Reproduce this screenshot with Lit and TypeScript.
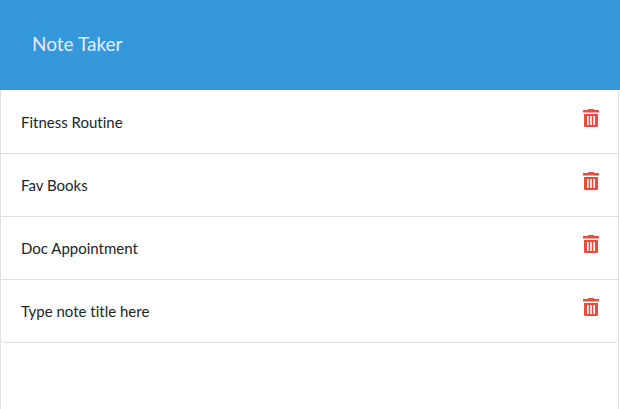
import { LitElement, html, css } from "lit";
import { customElement, state } from "lit/decorators.js";

@customElement("app-root")
export class AppRoot extends LitElement {
  static styles = css`
    :host {
      display: flex;
      flex-direction: column;
      min-height: 100vh;
      background: #fff;
      color: #212529;
      font-family: Lato, "Liberation Sans", sans-serif;
      font-size: 15px;
      line-height: 22px;
      font-variant-ligatures: none;
    }
    header {
      padding: 31px 32px 33px;
      background: #3498db;
    }
    .brand {
      display: block;
      color: #e8ecef;
      font-size: 19px;
      line-height: 26px;
      text-decoration: none;
    }
    main {
      flex: 1;
      margin-right: 1px;
      border: solid #dfdfdf;
      border-width: 0 1px;
    }
    ul {
      margin: 0;
      padding: 1px 0 0;
      list-style: none;
    }
    li {
      display: flex;
      justify-content: space-between;
      align-items: flex-start;
      padding: 20px 19px 20px 20px;
      border-bottom: 1px solid #dfdfdf;
    }
    li:last-child {
      border-radius: 0 0 4px 4px;
    }
    .title {
      color: #212529;
      text-decoration: none;
    }
    .delete {
      display: flex;
      margin-top: -2px;
      padding: 0;
      border: 0;
      background: none;
      color: #e74c3c;
      cursor: pointer;
    }
  `;

  @state() private notes = ["Fitness Routine", "Fav Books", "Doc Appointment", "Type note title here"];

  private remove(index: number) {
    this.notes = this.notes.filter((_, i) => i !== index);
  }

  render() {
    return html`
      <header><a class="brand" href="#">Note Taker</a></header>
      <main>
        <ul>
          ${this.notes.map(
            (note, i) => html`<li>
              <a class="title" href="#">${note}</a>
              <button class="delete" aria-label="Delete ${note}" @click=${() => this.remove(i)}>
                <svg width="16" height="18" viewBox="0 0 16 18" fill="currentColor" aria-hidden="true">
                  <path d="M5.300 0h5.400l.5 1H15.600l.4.400V3.200l-.3.200H.3L0 3.200V1.400L.4 1H4.800z" />
                  <path fill-rule="evenodd" d="M1 5h14v12a1 1 0 0 1-1 1H2a1 1 0 0 1-1-1zM4 7v9h1.700V7zM7.200 7v9h1.600V7zM10.300 7v9H12V7z" />
                </svg>
              </button>
            </li>`
          )}
        </ul>
      </main>
    `;
  }
}
